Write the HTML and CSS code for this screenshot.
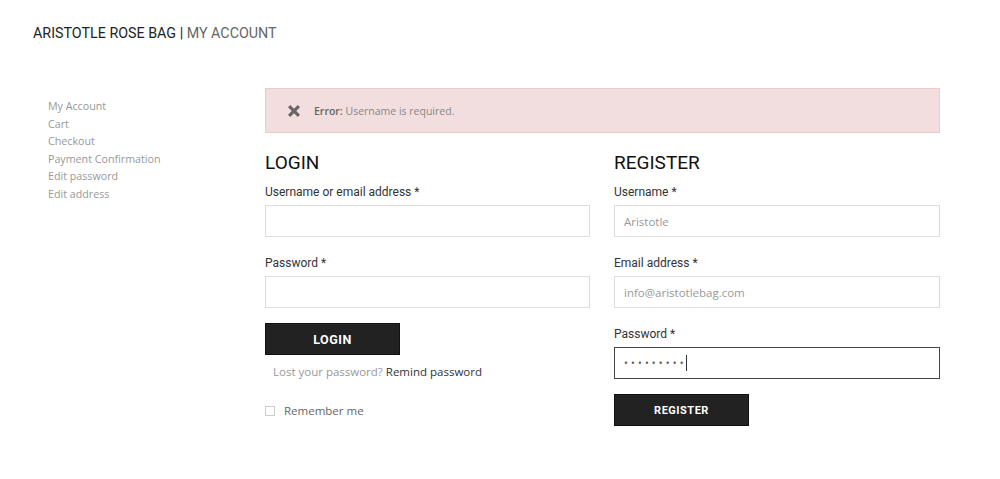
FILE: index.html
```html
<!DOCTYPE html>
<html lang="en">
<head>
    <meta charset="UTF-8">
    <meta name="viewport" content="width=device-width, initial-scale=1.0">
    <title>My Account</title>
    <link rel="stylesheet" href="styles.css">
</head>
<body>
    <header class="topo">
        <span class="marca">ARISTOTLE ROSE BAG</span> | <span class="pagina">MY ACCOUNT</span>
    </header>

    <div class="conteudo">
        <nav class="menu">
            <a href="#">My Account</a>
            <a href="#">Cart</a>
            <a href="#">Checkout</a>
            <a href="#">Payment Confirmation</a>
            <a href="#">Edit password</a>
            <a href="#">Edit address</a>
        </nav>

        <main class="principal">
            <div class="erro">
                <svg class="erro-icone" viewBox="0 0 14 14" width="14" height="14">
                    <path d="M1 3.2 3.2 1 7 4.8 10.8 1 13 3.2 9.2 7 13 10.8 10.8 13 7 9.2 3.2 13 1 10.8 4.8 7Z" fill="#666"/>
                </svg>
                <p><strong>Error:</strong> Username is required.</p>
            </div>

            <div class="colunas">
                <form class="coluna" action="#">
                    <h2>LOGIN</h2>
                    <label for="login_usuario">Username or email address *</label>
                    <input id="login_usuario" type="text">
                    <label for="login_senha">Password *</label>
                    <input id="login_senha" type="password">
                    <button class="botao botao-login" type="submit">LOGIN</button>
                    <p class="lembrar-senha">Lost your password? <a href="#">Remind password</a></p>
                    <label class="lembrar-me"><span class="caixa"></span>Remember me</label>
                </form>

                <form class="coluna" action="#">
                    <h2>REGISTER</h2>
                    <label for="reg_usuario">Username *</label>
                    <input id="reg_usuario" type="text" placeholder="Aristotle">
                    <label for="reg_email">Email address *</label>
                    <input id="reg_email" type="email" placeholder="info@aristotlebag.com">
                    <label for="reg_senha">Password *</label>
                    <div class="campo-ativo">&bull;&bull;&bull;&bull;&bull;&bull;&bull;&bull;&bull;<span class="cursor"></span></div>
                    <button class="botao botao-registro" type="submit">REGISTER</button>
                </form>
            </div>
        </main>
    </div>
</body>
</html>
```

FILE: styles.css
```css
body{
    margin: 0;
    background-color: #fff;
    font-family: "Open Sans", sans-serif;
    color: #333;
}

.topo{
    padding: 25px 0 0 33px;
    height: 25px;
    font-family: Roboto, sans-serif;
    font-size: 14.3px;
    color: #222;
}

.pagina{
    color: #666;
}

.conteudo{
    display: flex;
    padding-top: 38px;
}

.menu{
    display: flex;
    flex-direction: column;
    width: 217px;
    padding: 10px 0 0 48px;
}

.menu a{
    color: #999;
    text-decoration: none;
    font-size: 10.7px;
    line-height: 17.5px;
}

.principal{
    width: 675px;
}

.erro{
    display: flex;
    align-items: center;
    height: 43px;
    background-color: #f2dede;
    border: 1px solid #ebcccc;
    padding-left: 21px;
}

.erro-icone{
    margin-right: 13px;
}

.erro p{
    margin: 0;
    font-size: 10.5px;
    color: #888;
}

.erro strong{
    color: #666;
    font-weight: 600;
}

.colunas{
    display: grid;
    grid-template-columns: 325px 1fr;
    gap: 24px;
    padding-top: 18px;
}

.coluna{
    display: flex;
    flex-direction: column;
}

.coluna h2{
    margin: 0 0 8px 0;
    font-family: Roboto, sans-serif;
    font-weight: 400;
    font-size: 19px;
    color: #111;
}

.coluna label{
    font-family: Roboto, sans-serif;
    font-size: 12px;
    color: #333;
    padding-top: 3px;
    margin-bottom: 6px;
}

.coluna input{
    height: 32px;
    box-sizing: border-box;
    border: 1px solid #ddd;
    margin: 0 0 16px 0;
    padding: 0 9px;
    font-family: "Open Sans", sans-serif;
    font-size: 11.5px;
}

.coluna input::placeholder{
    color: #999;
}

.campo-ativo{
    display: flex;
    align-items: center;
    height: 32px;
    box-sizing: border-box;
    border: 1px solid #444;
    margin-bottom: 16px;
    padding: 0 9px;
    font-size: 10px;
    letter-spacing: 3.2px;
    color: #555;
}

.cursor{
    display: inline-block;
    width: 1px;
    height: 16px;
    margin-left: -1px;
    background-color: #333;
}

.botao{
    width: 135px;
    height: 32px;
    margin-top: -1px;
    background-color: #222;
    color: #fff;
    border: 1px solid #111;
    font-family: Roboto, sans-serif;
    font-weight: 700;
    letter-spacing: 0.5px;
}

.botao-login{
    font-size: 12.5px;
}

.botao-registro{
    font-size: 11px;
}

.coluna .botao + .lembrar-senha{
    margin: 9px 0 0 8px;
}

.lembrar-senha{
    font-size: 11.5px;
    color: #999;
}

.lembrar-senha a{
    color: #333;
    text-decoration: none;
}

.coluna .lembrar-me{
    display: flex;
    align-items: center;
    margin-top: 21px;
    font-family: "Open Sans", sans-serif;
    font-size: 11.5px;
    color: #666;
}

.caixa{
    width: 8px;
    height: 8px;
    border: 1px solid #ccc;
    margin-right: 9px;
}
```
